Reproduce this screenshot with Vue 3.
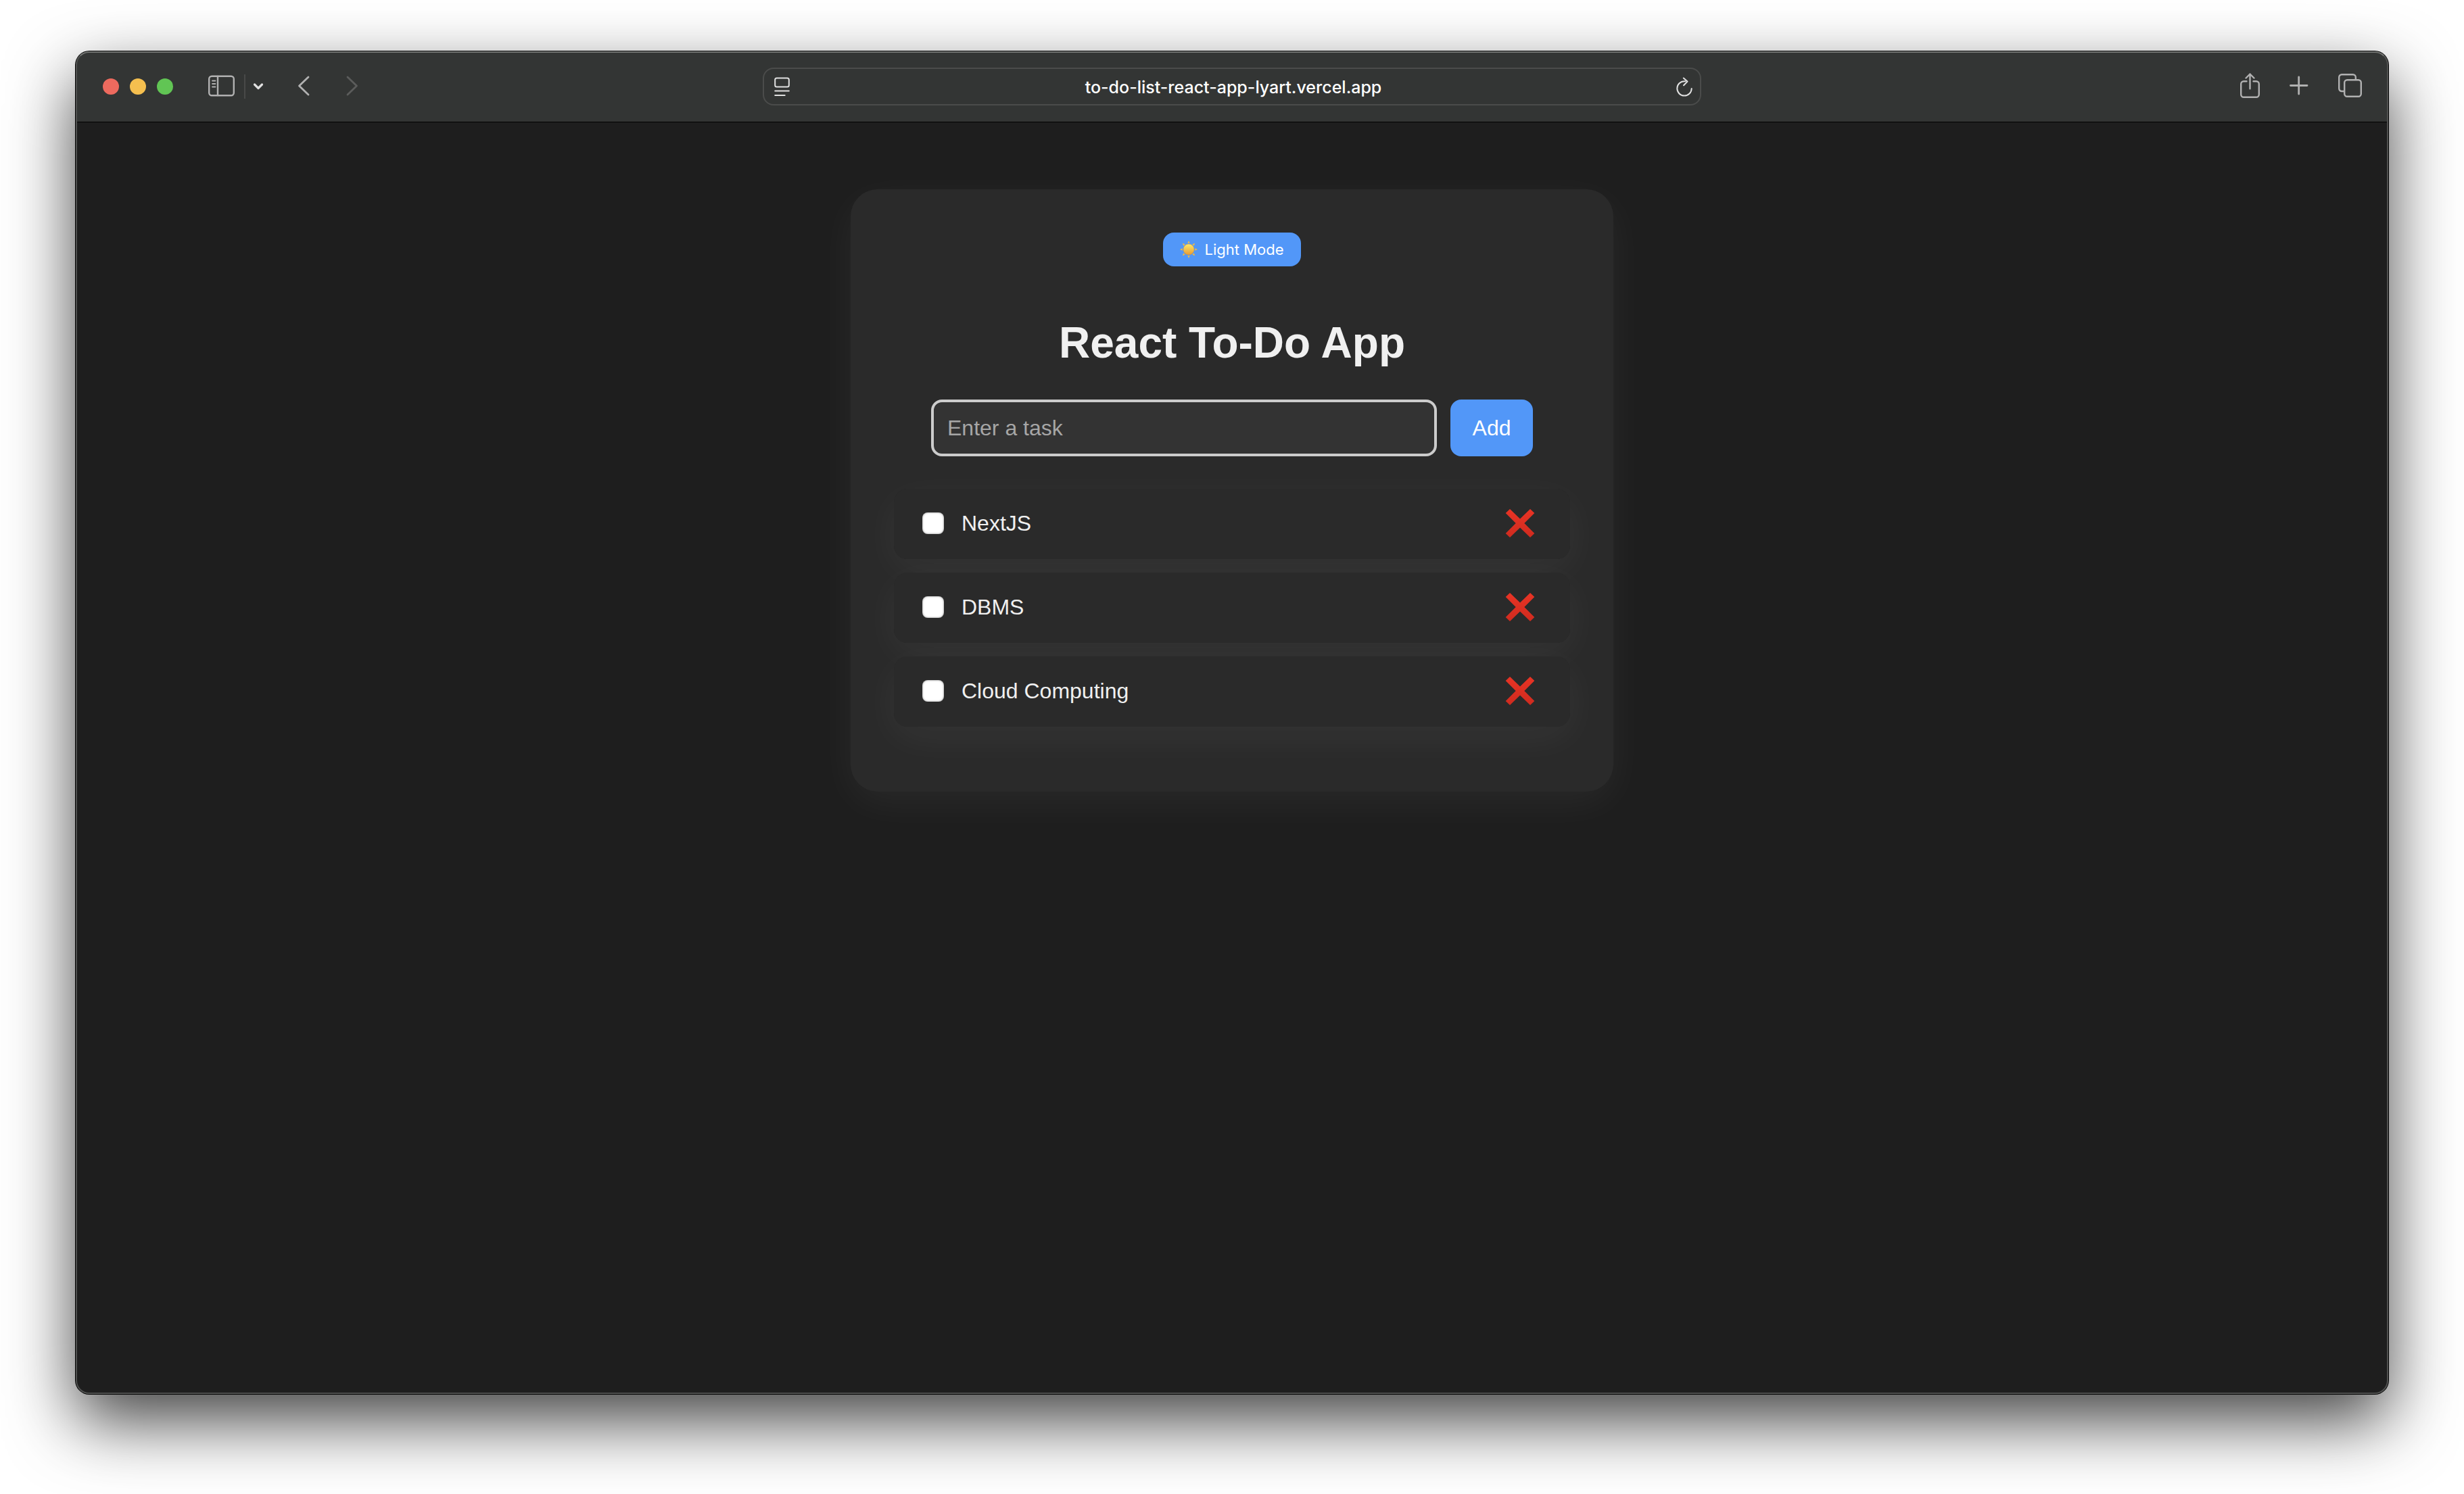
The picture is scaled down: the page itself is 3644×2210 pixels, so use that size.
<script setup>
import { ref } from 'vue'

const address = ref('to-do-list-react-app-lyart.vercel.app')
const draft = ref('')
const tasks = ref([
  { id: 1, title: 'NextJS', done: false },
  { id: 2, title: 'DBMS', done: false },
  { id: 3, title: 'Cloud Computing', done: false },
])
const rays = [0, 45, 90, 135, 180, 225, 270, 315]

function addTask() {
  const title = draft.value.trim()
  if (!title) return
  tasks.value.push({ id: Date.now(), title, done: false })
  draft.value = ''
}

function removeTask(id) {
  tasks.value = tasks.value.filter((task) => task.id !== id)
}
</script>

<template>
  <div class="desktop">
    <div class="window">
      <header class="toolbar">
        <div class="group group-left">
          <div class="lights">
            <button class="light close" aria-label="Close"></button>
            <button class="light minimize" aria-label="Minimize"></button>
            <button class="light zoom" aria-label="Zoom"></button>
          </div>
          <button class="tool" aria-label="Show sidebar">
            <svg width="40" height="40" viewBox="0 0 40 40">
              <rect x="1.2" y="4.7" width="36.6" height="28.6" rx="4" />
              <path d="M14 5v28" />
              <path d="M6 11.5h4.5M6 16h4.5M6 20.5h4.5" stroke-width="1.8" />
            </svg>
          </button>
          <span class="divider"></span>
          <button class="tool bright" aria-label="Tab groups">
            <svg width="16" height="40" viewBox="0 0 16 40">
              <path d="M2.5 17L8 22.5L13.5 17" class="bold" />
            </svg>
          </button>
          <button class="tool back" aria-label="Back">
            <svg width="18" height="40" viewBox="0 0 18 40">
              <path d="M16 6L2.5 19L16 32" class="medium" />
            </svg>
          </button>
          <button class="tool forward" aria-label="Forward">
            <svg width="18" height="40" viewBox="0 0 18 40">
              <path d="M2 6L15.5 19L2 32" class="medium" />
            </svg>
          </button>
        </div>

        <div class="address">
          <button class="tool bright" aria-label="Page menu">
            <svg width="24" height="40" viewBox="0 0 24 40">
              <rect x="1.2" y="7.6" width="20.6" height="12.8" rx="2.5" class="thin" />
              <path d="M1.2 26.500h20.600M1.200 33h14.500" class="thin" />
            </svg>
          </button>
          <input v-model="address" class="url" type="text" aria-label="Address" />
          <button class="tool bright" aria-label="Reload">
            <svg width="24" height="40" viewBox="0 0 24 40">
              <path d="M13.5 12.2H12A10.700 10.700 0 1 0 22.700 23" class="thin" />
              <path d="M10.8 7.5L16.5 12.6L11 18.3" class="thin" />
            </svg>
          </button>
        </div>

        <div class="group group-right">
          <button class="tool" aria-label="Share">
            <svg width="31" height="40" viewBox="0 0 31 40">
              <path d="M10.5 12.2H6.2a4 4 0 0 0-4 4v15.5a4 4 0 0 0 4 4h18.600a4 4 0 0 0 4-4V16.200a4 4 0 0 0-4-4H20.500" />
              <path d="M15.5 23.3V1.5M9.5 7.5l6-6l6 6" />
            </svg>
          </button>
          <button class="tool" aria-label="New tab">
            <svg width="28" height="40" viewBox="0 0 28 40">
              <path d="M1.5 18.5h24.5M13.7 6v25" class="medium" />
            </svg>
          </button>
          <button class="tool" aria-label="Show all tabs">
            <svg width="37" height="40" viewBox="0 0 37 40">
              <rect x="10.2" y="10.2" width="24.6" height="24.6" rx="4" />
              <path d="M9.500 27H6.200a4 4 0 0 1-4-4V6.200a4 4 0 0 1 4-4h16.600a4 4 0 0 1 4 4V9" />
            </svg>
          </button>
        </div>
      </header>

      <main class="page">
        <section class="card">
          <button class="mode">
            <svg class="sun" width="26" height="28" viewBox="-13 -13 26 26">
              <defs>
                <linearGradient id="sunFill" x1="0" y1="0" x2="0" y2="1">
                  <stop offset="0" stop-color="#fdea6a" />
                  <stop offset="1" stop-color="#e79a34" />
                </linearGradient>
              </defs>
              <path
                v-for="angle in rays"
                :key="angle"
                d="M-1.7 -9.3L0 -13L1.7 -9.3Z"
                fill="#f0bb45"
                :transform="`rotate(${angle})`"
              />
              <circle r="8" fill="url(#sunFill)" stroke="#d79a3c" stroke-width="0.5" />
            </svg>
            Light Mode
          </button>

          <h1>React To-Do App</h1>

          <form class="entry" @submit.prevent="addTask">
            <input v-model="draft" class="field" type="text" placeholder="Enter a task" aria-label="Task" />
            <button class="add" type="submit">Add</button>
          </form>

          <ul class="tasks">
            <li v-for="task in tasks" :key="task.id" class="task">
              <label class="task-label">
                <input v-model="task.done" type="checkbox" class="check" />
                <span>{{ task.title }}</span>
              </label>
              <button class="remove" :aria-label="`Delete ${task.title}`" @click="removeTask(task.id)">
                <svg width="44" height="44" viewBox="0 0 44 44">
                  <defs>
                    <linearGradient :id="`cross${task.id}`" x1="0" y1="0" x2="0" y2="1">
                      <stop offset="0" stop-color="#e93425" />
                      <stop offset="1" stop-color="#cf2b1f" />
                    </linearGradient>
                  </defs>
                  <path
                    d="M7 1L22 15.500L37 1L43.300 7L28.300 22L43.300 37L37 43L22 28.500L7 43L.7 37L15.700 22L.7 7Z"
                    :fill="`url(#cross${task.id})`"
                  />
                </svg>
              </button>
            </li>
          </ul>
        </section>
      </main>
    </div>
  </div>
</template>

<style>
body {
  margin: 0;
  background: #fff;
}
</style>

<style scoped>
.desktop {
  box-sizing: border-box;
  display: flex;
  min-height: 100vh;
  padding: 76px 112px 148px;
  overflow: hidden;
  background: #fff;
  font-family: "Liberation Sans", Arial, sans-serif;
}

button {
  display: flex;
  align-items: center;
  justify-content: center;
  padding: 0;
  border: 0;
  background: none;
  cursor: pointer;
}

.window {
  position: relative;
  flex: 1;
  display: flex;
  flex-direction: column;
  border-radius: 20px;
  background: #1e1e1e;
  box-shadow: 0 0 0 1px #000, 0 40px 100px rgba(0, 0, 0, 0.74);
}

/* light rim over the window's edge */
.window::after {
  content: "";
  position: absolute;
  inset: 0;
  border: 2px solid #4f504f;
  border-top-color: #737573;
  border-radius: 20px;
  pointer-events: none;
}

.toolbar {
  display: grid;
  grid-template-columns: 1fr minmax(0, 1388px) 1fr;
  align-items: center;
  height: 104px;
  border-bottom: 1px solid #000;
  border-radius: 20px 20px 0 0;
  background: #333534;
}

.group {
  display: flex;
  align-items: center;
}

.group-left {
  padding-left: 40px;
}

.group-right {
  justify-content: flex-end;
  gap: 43px;
  padding-right: 38px;
}

.lights {
  display: flex;
  gap: 16px;
  margin-right: 52px;
}

.light {
  width: 24px;
  height: 24px;
  border-radius: 50%;
}

.close {
  background: #ed6a5e;
}

.minimize {
  background: #f5bf4f;
}

.zoom {
  background: #61c554;
}

.tool {
  color: #b1b1b1;
}

.tool svg {
  display: block;
  overflow: visible;
  fill: none;
  stroke: currentColor;
  stroke-width: 2.4;
  stroke-linecap: round;
  stroke-linejoin: round;
}

.tool .thin {
  stroke-width: 2;
}

.tool .medium {
  stroke-width: 2.8;
}

.tool .bold {
  stroke-width: 3.2;
}

.bright {
  color: #e0e0e0;
}

.divider {
  width: 2px;
  height: 36px;
  margin: 0 11px 0 13px;
  background: #484948;
}

.back {
  margin-left: 50px;
}

.forward {
  margin-left: 54px;
  color: #5b5c5b;
}

.address {
  box-sizing: border-box;
  display: flex;
  align-items: center;
  height: 56px;
  padding: 0 11px 0 15px;
  border: 2px solid #4b4c4b;
  border-radius: 16px;
}

.url {
  flex: 1;
  min-width: 0;
  padding: 2px 0 0;
  border: 0;
  outline: 0;
  background: none;
  color: #fff;
  font: 500 25px/32px Inter, sans-serif;
  text-align: center;
}

.page {
  flex: 1;
  display: flex;
  align-items: flex-start;
  justify-content: center;
  padding: 99px 32px;
}

.card {
  box-sizing: border-box;
  display: flex;
  flex-direction: column;
  align-items: center;
  width: 100%;
  max-width: 1128px;
  padding: 64px 64px 96px;
  border-radius: 40px;
  background: #2a2a2a;
  box-shadow: 0 16px 60px rgba(255, 255, 255, 0.05);
}

.mode {
  gap: 10px;
  height: 50px;
  padding: 0 25px;
  border-radius: 16px;
  background: #5297f8;
  color: #fff;
  font: 400 22px/28px Inter, sans-serif;
}

h1 {
  margin: 77px 0 48px;
  color: #f0f0f0;
  font-size: 64px;
  font-weight: 700;
  line-height: 72px;
}

.entry {
  display: flex;
  gap: 20px;
  width: 100%;
  max-width: 890px;
}

.field {
  box-sizing: border-box;
  flex: 1;
  min-width: 0;
  height: 84px;
  padding: 0 20px;
  border: 4px solid #ccc;
  border-radius: 16px;
  outline: 0;
  background: #333;
  color: #f0f0f0;
  font: 400 32px/40px "Liberation Sans", Arial, sans-serif;
}

.field::placeholder {
  color: #a6a6a6;
  opacity: 1;
}

.add {
  width: 122px;
  border-radius: 16px;
  background: #5297f8;
  color: #fff;
  font: 400 32px/40px "Liberation Sans", Arial, sans-serif;
}

.tasks {
  isolation: isolate;
  display: flex;
  flex-direction: column;
  gap: 20px;
  width: 100%;
  margin: 48px 0 0;
  padding: 0;
  list-style: none;
}

.task {
  position: relative;
  box-sizing: border-box;
  display: flex;
  align-items: center;
  justify-content: space-between;
  height: 104px;
  padding: 0 52px 2px 42px;
  border-radius: 20px;
  background: #2a2a2a;
}

/* the glow stays behind every row, so neighbours keep a flat fill */
.task::before {
  content: "";
  position: absolute;
  inset: 0;
  z-index: -1;
  border-radius: 20px;
  box-shadow: 0 16px 60px rgba(255, 255, 255, 0.05);
}

.task-label {
  display: flex;
  align-items: center;
  gap: 26px;
  color: #f0f0f0;
  font-size: 32px;
  line-height: 40px;
}

.check {
  appearance: none;
  width: 32px;
  height: 32px;
  margin: 0;
  border-radius: 8px;
  background: #fff;
  box-shadow: inset 0 0 3px rgba(0, 0, 0, 0.5);
}

.check:checked {
  background: #5297f8;
}

.remove svg {
  display: block;
}
</style>
